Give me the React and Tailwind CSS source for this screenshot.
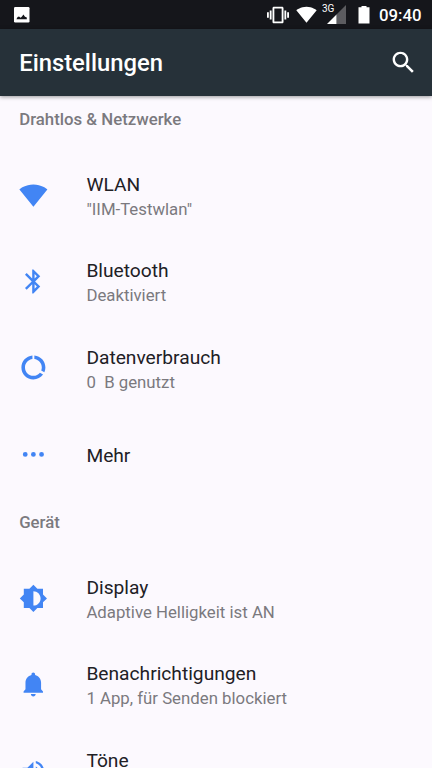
const icons = {
    wifi: 'M12.01 21.49L23.64 7c-.45-.34-4.93-4-11.64-4C5.28 3 .81 6.66.36 7l11.63 14.49.01.01.01-.01z',
    bluetooth: 'M17.71 7.71L12 2h-1v7.59L6.41 5 5 6.41 10.59 12 5 17.59 6.41 19 11 14.41V22h1l5.71-5.71-4.3-4.29 4.3-4.29zM13 5.83l1.88 1.88L13 9.59V5.83zm1.88 10.46L13 18.17v-3.76l1.88 1.88z',
    data: 'M12.8 2.05v3.03c3.39.49 6.2 3.39 6.2 6.92 0 .9-.18 1.75-.48 2.54l2.6 1.53c.56-1.24.88-2.62.88-4.07 0-5.18-3.95-9.45-9.2-9.95zM12 19c-3.87 0-7-3.13-7-7 0-3.53 2.81-6.43 6.2-6.92V2.05c-5.26.5-9.2 4.76-9.2 9.95 0 5.52 4.47 10 9.99 10 3.31 0 6.24-1.61 8.06-4.09l-2.6-1.53C16.17 17.98 14.21 19 12 19z',
    more: 'M5.2 10a2 2 0 1 0 0 4 2 2 0 0 0 0-4zM12 10a2 2 0 1 0 0 4 2 2 0 0 0 0-4zM18.8 10a2 2 0 1 0 0 4 2 2 0 0 0 0-4z',
    display: 'M20 15.31L23.31 12 20 8.69V4h-4.69L12 .69 8.69 4H4v4.69L.69 12 4 15.31V20h4.69L12 23.31 15.31 20H20v-4.69zM12 18V6c3.31 0 6 2.69 6 6s-2.69 6-6 6z',
    bell: 'M11.9 22c1.1 0 2-.9 2-2h-4c0 1.1.9 2 2 2zm6.5-6v-5.5c0-3.07-2.13-5.64-5-6.32V3.5c0-.83-.67-1.5-1.5-1.5s-1.5.67-1.5 1.5v.68c-2.87.68-5 3.25-5 6.32V16l-1.6 2v1h16.2v-1l-1.6-2z',
    volume: 'M3 9v6h4l5 5V4L7 9H3zm13.5 3c0-1.77-1.02-3.29-2.5-4.03v8.05c1.48-.73 2.5-2.25 2.5-4.02zM14 3.23v2.06c2.89.86 5 3.54 5 6.71s-2.11 5.85-5 6.71v2.06c4.01-.91 7-4.49 7-8.77s-2.99-7.86-7-8.77z',
    search: 'M15.5 14h-.79l-.28-.27C15.41 12.59 16 11.11 16 9.5 16 5.91 13.09 3 9.5 3S3 5.91 3 9.5 5.91 16 9.5 16c1.61 0 3.09-.59 4.23-1.57l.27.28v.79l5 4.99L20.49 19l-4.99-5zm-6 0C7.01 14 5 11.99 5 9.5S7.01 5 9.5 5 14 7.01 14 9.5 11.99 14 9.5 14z',
    vibration: 'M0 15h2V9H0v6zm3 2h2V7H3v10zm19-8v6h2V9h-2zm-3 8h2V7h-2v10zM16.5 3h-9C6.67 3 6 3.67 6 4.5v15c0 .83.67 1.5 1.5 1.5h9c.83 0 1.5-.67 1.5-1.5v-15c0-.83-.67-1.5-1.5-1.5zM16 19H8V5h8v14z',
};

const sections = [
    {
        title: 'Drahtlos & Netzwerke',
        items: [
            { icon: 'wifi', title: 'WLAN', summary: '"IIM-Testwlan"' },
            { icon: 'bluetooth', title: 'Bluetooth', summary: 'Deaktiviert' },
            { icon: 'data', title: 'Datenverbrauch', summary: '0  B genutzt' },
            { icon: 'more', title: 'Mehr' },
        ],
    },
    {
        title: 'Gerät',
        items: [
            { icon: 'display', title: 'Display', summary: 'Adaptive Helligkeit ist AN' },
            { icon: 'bell', title: 'Benachrichtigungen', summary: '1 App, für Senden blockiert' },
            { icon: 'volume', title: 'Töne', summary: ' ' },
        ],
    },
];

const Icon = ({ name, className }) => (
    <svg viewBox="0 0 24 24" fill="currentColor" className={className}>
        <path d={icons[name]} />
    </svg>
);

const StatusBar = () => (
    <div className="flex items-center justify-between h-[29px] shrink-0 pl-3.5 pr-[9px] bg-[#15161b] text-white">
        <svg viewBox="0 0 16 16" className="w-4 h-4">
            <rect width="15.5" height="15.5" rx="1.2" fill="currentColor" />
            <path d="M2.4 12.3 L3.6 10 L5 9.6 L6.6 10.8 L8 9.6 L9.4 7.6 L11 9.8 L12.8 10.6 V12.3z" fill="#15161b" />
        </svg>
        <div className="flex items-center">
            <Icon name="vibration" className="w-[22px] h-[22px] -ml-px" />
            <Icon name="wifi" className="w-[21px] h-[21px] ml-[7px]" />
            <div className="relative ml-[5px] w-[24px] h-[29px]">
                <span className="absolute left-0 top-[3px] text-[10px] leading-[11px]">3G</span>
                <svg viewBox="0 0 24 29" className="w-[24px] h-[29px]">
                    <path d="M14.5 14.5 L24 5 V24 H14.5z" fill="#5c5c60" />
                    <path d="M5 24 L14.5 14.5 V24z" fill="currentColor" />
                </svg>
            </div>
            <svg viewBox="0 0 12 18" className="w-3 h-[18px] ml-3">
                <path d="M3.5 0h5v1.2H11.5V17.5H.5V1.2h3z" fill="currentColor" />
            </svg>
            <span className="w-[53px] pt-px pl-[9px] text-[16.8px] leading-none font-medium whitespace-nowrap">09:40</span>
        </div>
    </div>
);

const Item = ({ icon, title, summary }) => (
    <li className="flex items-center h-[86.4px] pl-[19.2px]">
        <Icon name={icon} className="w-[28.8px] h-[28.8px] shrink-0 text-[#4285f4]" />
        <div className="ml-[38.4px] pt-[3.2px] whitespace-pre">
            <p className="text-[19.2px] leading-[25px] text-[#212025]">{title}</p>
            {summary && <p className="text-[16.8px] leading-[24.6px] text-[#7b797e]">{summary}</p>}
        </div>
    </li>
);

const App = () => {
    return (
        <div className="flex flex-col w-full h-screen overflow-hidden bg-[#fcf9fe] font-['Roboto',sans-serif]">
            <StatusBar />
            <header className="relative z-10 flex items-center justify-between h-[67px] shrink-0 pl-[19.2px] pr-[14px] bg-[#263139] text-white shadow-[0_1px_4px_rgba(0,0,0,0.4)]">
                <h1 className="pt-[3px] text-[23.8px] font-medium">Einstellungen</h1>
                <Icon name="search" className="w-[29px] h-[29px]" />
            </header>
            <main className="-mt-[1.8px]">
                {sections.map((section) => (
                    <section key={section.title}>
                        <h2 className="h-[57.6px] pt-[12.6px] pl-[19.2px] text-[16.8px] leading-6 font-medium text-[#7b797e]">{section.title}</h2>
                        <ul>
                            {section.items.map((item) => (
                                <Item key={item.title} {...item} />
                            ))}
                        </ul>
                    </section>
                ))}
            </main>
        </div>
    );
};

export default App;
